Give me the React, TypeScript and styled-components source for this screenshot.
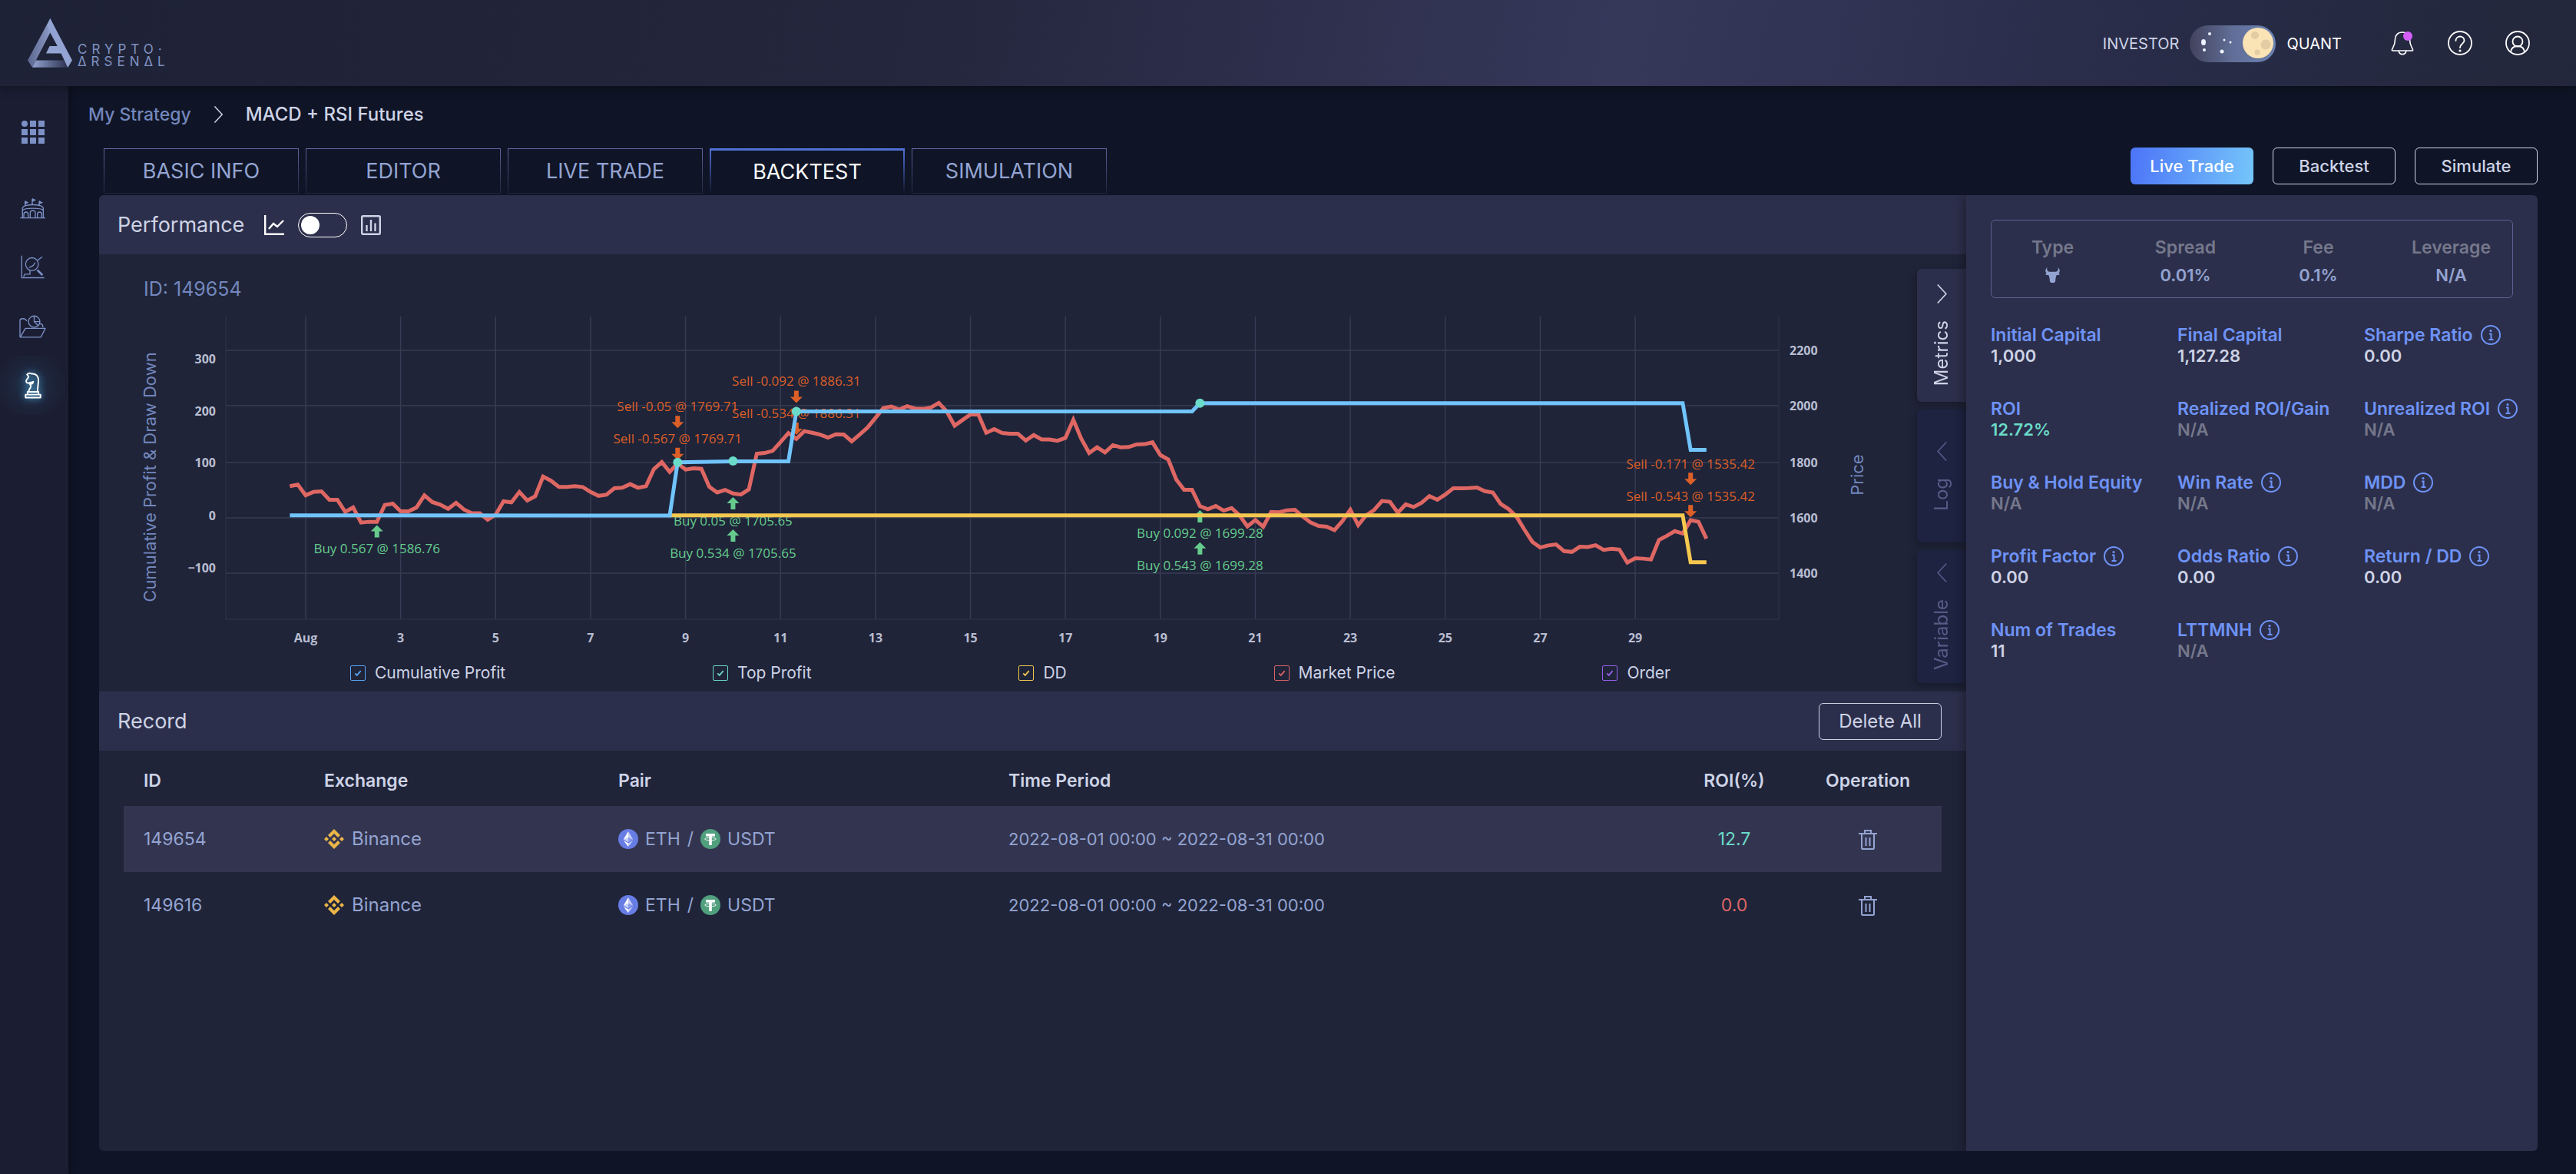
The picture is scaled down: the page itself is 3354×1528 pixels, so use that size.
import React from "react";
import styled, { createGlobalStyle, css } from "styled-components";

const color = {
  page: "#0f1526",
  rail: "#1b1e33",
  panel: "#1f2439",
  bar: "#2c2f4b",
  rowActive: "#333550",
  light: "#ced3e6",
  muted: "#94a4d2",
  dim: "#7387bd",
  blue: "#6e93f7",
  grey: "#75788c",
  green: "#6adbc9",
  red: "#dd6464",
  line: "#5b6192",
};

const GlobalStyle = createGlobalStyle`
  *, *::before, *::after { box-sizing: border-box; }
  body {
    margin: 0;
    background: ${color.page};
    color: ${color.light};
    font-family: Inter, "Liberation Sans", sans-serif;
    font-size: 23px;
    line-height: 28px;
  }
  button { font: inherit; color: inherit; background: none; border: 0; padding: 0; cursor: pointer; }
  a { color: inherit; text-decoration: none; }
  svg { display: block; flex: none; }
`;

/* ---------- page frame ---------- */

const Page = styled.div`
  min-height: 100vh;
  display: flex;
  flex-direction: column;
`;

const TopBar = styled.header`
  position: relative;
  z-index: 2;
  height: 112px;
  padding: 0 60px 0 36px;
  display: flex;
  align-items: center;
  justify-content: space-between;
  background: linear-gradient(100deg, #1e2236 0%, #23263c 35%, #36385a 63%, #282c48 83%, #22273b 100%);
  box-shadow: 0 4px 12px rgba(0, 0, 0, 0.3);
`;

const Brand = styled.a`
  display: flex;
  align-items: flex-end;
  gap: 7px;
`;

const BrandName = styled.span`
  display: flex;
  flex-direction: column;
  color: #7f92c2;
  font-size: 17px;
  line-height: 16px;
  letter-spacing: 6px;
`;

const TopTools = styled.div`
  display: flex;
  align-items: center;
  gap: 43px;
`;

const ModeSwitch = styled.label`
  position: relative;
  display: flex;
  align-items: center;
  gap: 14px;
  margin-right: 20px;
  padding-top: 2px;
  font-size: 20px;
`;

const ModeName = styled.span<{ $on?: boolean }>`
  color: ${(p) => (p.$on ? "#ffffff" : color.light)};
`;

const HiddenInput = styled.input`
  position: absolute;
  opacity: 0;
  inset: 0;
  margin: 0;
`;

const IconButton = styled.button`
  display: grid;
  place-items: center;
  width: 32px;
  height: 36px;
  color: #fff;
`;

const Body = styled.div`
  flex: 1;
  display: flex;
`;

const Rail = styled.nav`
  width: 89px;
  flex: none;
  background: ${color.rail};
  box-shadow: 2px 0 10px rgba(0, 0, 0, 0.35);
  display: flex;
  flex-direction: column;
  padding-top: 21px;
  color: #7c90c6;
`;

const RailLink = styled.a<{ $first?: boolean; $active?: boolean }>`
  display: grid;
  place-items: center;
  height: 77px;
  padding-right: 4px;
  margin-bottom: ${(p) => (p.$first ? 22 : 0)}px;
  ${(p) =>
    p.$active &&
    css`
      color: #fff;
      background: radial-gradient(circle at 45% 50%, #24405c 0%, rgba(31, 48, 72, 0.5) 35%, transparent 75%);
      svg { filter: drop-shadow(0 0 5px #57b4ee); }
    `}
`;

const Main = styled.main`
  flex: 1;
  min-width: 0;
  display: flex;
  flex-direction: column;
  padding: 18px 50px 30px 40px;
`;

const Crumbs = styled.nav`
  display: flex;
  align-items: center;
  gap: 29px;
  height: 38px;
  margin-left: -14px;
  font-weight: 500;
  color: ${color.light};
`;

const CrumbLink = styled.a`
  color: ${color.dim};
`;

const CrumbHere = styled.span`
  font-size: 24px;
`;

const Toolbar = styled.div`
  display: flex;
  justify-content: space-between;
  align-items: flex-start;
  margin-top: 24px;
  height: 62px;
`;

const Tabs = styled.div`
  display: flex;
  gap: 9px;
  padding: 1px 0 0 6px;
`;

const Tab = styled.button<{ $active?: boolean }>`
  width: 254px;
  height: 59px;
  font-size: 27px;
  color: ${(p) => (p.$active ? "#fff" : color.muted)};
  border: 1px solid;
  border-image: linear-gradient(to bottom, #6268a0, #1f2440) 1;
  ${(p) =>
    p.$active &&
    css`
      border-width: 3px 2px 0;
      border-image: linear-gradient(to bottom, #5272dc, #0f1526) 3 2 0;
    `}
`;

const Actions = styled.div`
  display: flex;
  gap: 25px;
`;

const Button = styled.button<{ $primary?: boolean }>`
  width: 160px;
  height: 48px;
  border-radius: 6px;
  border: 1px solid ${color.light};
  font-size: 22px;
  font-weight: 500;
  ${(p) =>
    p.$primary &&
    css`
      border: 0;
      color: #fff;
      background: linear-gradient(100deg, #4c74f8, #75c6fa);
    `}
`;

const DeleteAll = styled(Button)`
  font-size: 24px;
  font-weight: 400;
`;

const Work = styled.div`
  flex: 1;
  display: flex;
  border-radius: 6px;
  overflow: hidden;
`;

const Left = styled.div`
  flex: 1;
  min-width: 0;
  background: ${color.panel};
`;

const Bar = styled.div`
  height: 77px;
  padding: 0 32px 0 24px;
  display: flex;
  align-items: center;
  justify-content: space-between;
  background: ${color.bar};
`;

const BarTitle = styled.h2`
  margin: 0;
  font-size: 27px;
  font-weight: 400;
`;

const ViewSwitch = styled.div`
  display: flex;
  align-items: center;
  gap: 18px;
  flex: 1;
  margin-left: 26px;
`;

const Switch = styled.input`
  appearance: none;
  margin: 0;
  width: 64px;
  height: 32px;
  border: 1px solid #fff;
  border-radius: 16px;
  padding: 3px;
  &::before {
    content: "";
    display: block;
    width: 24px;
    height: 24px;
    border-radius: 50%;
    background: #fff;
  }
`;

/* ---------- chart ---------- */

const ChartSection = styled.section`
  display: flex;
`;

const ChartColumn = styled.div`
  flex: 1;
  min-width: 0;
`;

const RunId = styled.p`
  margin: 27px 0 6px 58px;
  font-size: 25px;
  line-height: 36px;
  color: ${color.dim};
`;

const ChartSvg = styled.svg`
  width: 100%;
  height: auto;
`;

const Legend = styled.div`
  height: 50px;
  padding: 2px 186px 0 192px;
  display: flex;
  justify-content: space-around;
  align-items: center;
`;

const LegendItem = styled.label<{ $color: string }>`
  display: flex;
  align-items: center;
  gap: 12px;
  font-size: 21px;
  position: relative;
  svg {
    position: absolute;
    left: 5px;
    top: 9px;
    color: ${(p) => p.$color};
  }
  input {
    appearance: none;
    margin: 0;
    width: 20px;
    height: 20px;
    border: 1px solid ${(p) => p.$color};
    border-radius: 2px;
  }
`;

const SideTabs = styled.div`
  width: 64px;
  padding-top: 19px;
  display: flex;
  flex-direction: column;
  gap: 10px;
`;

const SideTab = styled.button<{ $active?: boolean }>`
  height: 173px;
  display: flex;
  flex-direction: column;
  align-items: center;
  justify-content: center;
  gap: 22px;
  border-radius: 6px 0 0 6px;
  background: ${(p) => (p.$active ? color.bar : "#1d2340")};
  color: ${(p) => (p.$active ? color.light : "#565b88")};
  box-shadow: -3px 4px 10px rgba(0, 0, 0, 0.25);
  font-size: 24px;
`;

const Upright = styled.span`
  writing-mode: vertical-rl;
  rotate: 180deg;
`;

/* ---------- record table ---------- */

const TableWrap = styled.div`
  padding: 6px 32px 0;
`;

const Table = styled.table`
  width: 100%;
  border-collapse: collapse;
  table-layout: fixed;
  color: ${color.muted};
`;

const Head = styled.th<{ $w?: number; $center?: boolean }>`
  width: ${(p) => (p.$w ? p.$w + "px" : "auto")};
  height: 66px;
  padding: 0 0 0 ${(p) => (p.$center ? 0 : 26)}px;
  text-align: ${(p) => (p.$center ? "center" : "left")};
  font-weight: 600;
  color: ${color.light};
`;

const Row = styled.tr<{ $active?: boolean }>`
  height: 86px;
  background: ${(p) => (p.$active ? color.rowActive : "transparent")};
`;

const Cell = styled.td<{ $center?: boolean; $tone?: string }>`
  padding: 0 0 0 ${(p) => (p.$center ? 0 : 26)}px;
  text-align: ${(p) => (p.$center ? "center" : "left")};
  color: ${(p) => p.$tone || "inherit"};
`;

const PeriodCell = styled(Cell)`
  font-size: 22px;
`;

const Inline = styled.div<{ $large?: boolean }>`
  display: flex;
  align-items: center;
  gap: ${(p) => (p.$large ? 10 : 9)}px;
  font-size: ${(p) => (p.$large ? 24 : 23)}px;
`;

const TrashButton = styled.button`
  display: inline-block;
  vertical-align: middle;
`;

/* ---------- metrics ---------- */

const Aside = styled.aside`
  width: 744px;
  flex: none;
  padding: 32px;
  background: ${color.bar};
  box-shadow: -4px 0 12px rgba(0, 0, 0, 0.3);
  z-index: 1;
  font-size: 23px;
  font-weight: 600;
`;

const Terms = styled.dl`
  margin: 0;
  height: 102px;
  padding-top: 6px;
  border: 1px solid ${color.line};
  border-radius: 6px;
  display: grid;
  grid-template-columns: repeat(4, 173px);
  justify-content: center;
  align-items: center;
  text-align: center;
`;

const Term = styled.div`
  display: flex;
  flex-direction: column;
  align-items: center;
  gap: 8px;
  dt { color: ${color.grey}; }
  dd { margin: 0; height: 28px; display: flex; align-items: center; color: ${color.muted}; font-size: 22px; }
`;

const Metrics = styled.dl`
  margin: 34px 0 0;
  display: grid;
  grid-template-columns: repeat(3, 243px);
  row-gap: 40px;
`;

const Metric = styled.div<{ $tone: string }>`
  height: 56px;
  dt {
    display: flex;
    align-items: center;
    gap: 10px;
    height: 28px;
    white-space: nowrap;
    color: ${color.blue};
  }
  dd { margin: 0; font-size: 22px; line-height: 26px; color: ${(p) => p.$tone}; }
`;

/* ---------- icons ---------- */

const Logo = () => (
  <svg width="58" height="64" viewBox="50 45 172 190" fill="none">
    <defs>
      <linearGradient id="lgLeft" x1="0" y1="0" x2="1" y2="0">
        <stop offset="0" stopColor="#5a678f" />
        <stop offset="0.6" stopColor="#7c89b3" />
        <stop offset="1" stopColor="#93a4d2" />
      </linearGradient>
      <linearGradient id="lgBase" x1="0" y1="0" x2="1" y2="0">
        <stop offset="0" stopColor="#93a4d2" />
        <stop offset="1" stopColor="#2b3050" />
      </linearGradient>
    </defs>
    <path d="M137 45 50 207l18 27 69-134 14-26z" fill="url(#lgLeft)" />
    <path d="M82 207h108l15 27H68z" fill="url(#lgBase)" />
    <path d="M137 45 222 207l-17 28-26-55h-58l14-28h30l-28-52-12-28z" fill="#93a4d2" />
  </svg>
);

const MoonSwitchArt = () => (
  <svg width="112" height="48" viewBox="0 0 112 48">
    <defs>
      <linearGradient id="night" x1="0" y1="0" x2="1" y2="0">
        <stop offset="0" stopColor="#42435d" />
        <stop offset="0.5" stopColor="#616e97" />
        <stop offset="1" stopColor="#6b83b5" />
      </linearGradient>
    </defs>
    <rect width="112" height="48" rx="24" fill="url(#night)" />
    <g fill="#eef3ff">
      <ellipse cx="18" cy="22" rx="3" ry="4" />
      <circle cx="26" cy="11" r="2" />
      <circle cx="19" cy="32" r="2" />
      <circle cx="45" cy="19" r="1.5" />
      <circle cx="53" cy="22" r="1.5" />
      <circle cx="42" cy="34" r="2.5" />
    </g>
    <circle cx="89" cy="24" r="20" fill="#3b4670" opacity="0.4" />
    <circle cx="89" cy="23" r="20" fill="#fae3b5" />
    <g fill="#e3cba4">
      <circle cx="85" cy="13" r="5" />
      <circle cx="99" cy="25" r="6.5" />
      <circle cx="88" cy="35" r="3.5" />
    </g>
  </svg>
);

const Bell = () => (
  <svg width="30" height="32" viewBox="0 0 30 32" fill="none" stroke="currentColor" strokeWidth="1.6">
    <path d="M15 2C9 2 5.500 6 5.500 11c0 7-2 9.500-4 13.500-.4.900 0 1.500.8 1.500h25.400c.8 0 1.200-.6.800-1.500-2-4-4-6.500-4-13.500C24.500 6 21 2 15 2z" />
    <path d="M10 26c.6 3 2.500 4.600 5 4.600s4.400-1.600 5-4.600" />
    <circle cx="22" cy="7" r="6" fill="#d45df8" stroke="none" />
  </svg>
);

const Help = () => (
  <svg width="32" height="32" viewBox="0 0 32 32" fill="none" stroke="currentColor" strokeWidth="1.800" strokeLinecap="round">
    <circle cx="16" cy="16" r="15" />
    <path d="M10.500 13c0-3.200 2.400-5.500 5.500-5.500s5.500 2.200 5.500 5.200c0 4.300-5.500 4.300-5.500 9.300" />
    <circle cx="16" cy="26" r="0.700" fill="currentColor" />
  </svg>
);

const User = () => (
  <svg width="32" height="32" viewBox="0 0 32 32" fill="none" stroke="currentColor" strokeWidth="1.800">
    <circle cx="16" cy="16" r="15" />
    <circle cx="16" cy="14" r="6.500" />
    <path d="M7 28c.5-5 4-8 9-8s8.500 3 9 8" />
  </svg>
);

const GridIcon = () => (
  <svg width="30" height="30" viewBox="0 0 30 30" fill="currentColor">
    {[0, 1, 2].flatMap((r) =>
      [0, 1, 2].map((c) =>
        r + c === 0 ? (
          <circle key="dot" cx="4" cy="4" r="4" />
        ) : (
          <rect key={`${r}${c}`} x={c * 11} y={r * 11} width="8" height="8" />
        )
      )
    )}
  </svg>
);

const Arena = () => (
  <svg width="34" height="28" viewBox="47 352 102 84" fill="none" stroke="currentColor" strokeWidth="4">
    <path d="M48 432h98M57 430v-36c0-18 81-18 81 0v36M57 402c10-10 71-10 81 0M62 430v-12c0-12 17-12 17 0v12M87 430v-18c0-12 20-12 20 0v18M115 430v-12c0-12 17-12 17 0v12M67 386v-20M95 380v-22M122 386v-20" />
    <path d="M67 364l14 8-14 7zM95 355l15 7-15 8zM122 364l15 8-15 7z" fill="currentColor" stroke="none" />
  </svg>
);

const Research = () => (
  <svg width="31" height="31" viewBox="50 574 93 92" fill="none" stroke="currentColor" strokeWidth="4">
    <path d="M54 576v86h88M61 657l5-9h20v-15" />
    <circle cx="94" cy="609" r="25" />
    <path d="M82 622c10-2 20-8 24-19M116 594l18-14" />
    <path d="M115 632l20 20" strokeWidth="8" />
  </svg>
);

const Folder = () => (
  <svg width="35" height="30" viewBox="44 808 104 88" fill="none" stroke="currentColor" strokeWidth="4" strokeLinejoin="round">
    <path d="M47 892v-64c0-8 20-8 22-3l4 6M48 893h80l17-34H68z" />
    <circle cx="102" cy="833" r="22" />
    <path d="M102 811v22h22M102 833l16 16M124 842c8-2 12 4 12 14" />
  </svg>
);

const Knight = () => (
  <svg width="22" height="35" viewBox="61 1029 68 107" fill="none" stroke="currentColor" strokeWidth="6" strokeLinejoin="round">
    <path d="M65 1132v-12h60v12zM73 1118v-9h44v9M78 1106c0-8 8-12 8-20l-3-8c8 0 12-4 13-10-6 4-14 2-18 6l-8-2c-5-5-2-12 4-17l3-8-6-8c5-5 13-6 18-3 24-2 30 18 27 36l-3 34" />
  </svg>
);

const Chevron = ({ left, w = 12, h = 24 }: { left?: boolean; w?: number; h?: number }) => (
  <svg width={w} height={h} viewBox="0 0 12 24" fill="none" stroke="currentColor" strokeWidth="1.600">
    <path d={left ? "M11.500 0.500.8 12l10.700 11.500" : "M.5.500 11.200 12 .5 23.500"} />
  </svg>
);

const LineChartIcon = () => (
  <svg width="26" height="26" viewBox="0 0 26 26" fill="none" stroke="#fff" strokeWidth="2.400">
    <path d="M1.200 0v24.800H26M6 18l6-7 5 4 8-8" />
  </svg>
);

const BarChartIcon = () => (
  <svg width="26" height="26" viewBox="0 0 26 26" fill="none" stroke={color.light} strokeWidth="2.400">
    <rect x="1.200" y="1.200" width="23.600" height="23.600" rx="1.500" />
    <path d="M7.500 21v-8M13 21V6M18.500 21V10.500" />
  </svg>
);

const InfoIcon = () => (
  <svg width="26" height="26" viewBox="0 0 26 26" fill="none" stroke="currentColor" strokeWidth="2">
    <circle cx="13" cy="13" r="12" />
    <path d="M11 11.500h2.500V19M10.500 19h6" />
    <circle cx="13" cy="7.500" r="1" fill="currentColor" stroke="none" />
    <circle cx="13" cy="7.500" r="0.600" />
  </svg>
);

const Bull = () => (
  <svg width="19" height="20" viewBox="0 0 19 20" fill="currentColor">
    <path d="M2.500 0C0 2-.5 5.500 1.500 7.500L0 9.500l4.500.8L5.500 14l.5 4.500L7.500 20h4l1.500-1.500.5-4.500 1-3.700 4.500-.8-1.500-2C19.500 5.500 19 2 16.500 0c1 3-.2 5.500-3.500 5.800H6C2.700 5.500 1.500 3 2.500 0z" />
  </svg>
);

const Binance = () => (
  <svg width="26" height="26" viewBox="0 0 26 26" fill="#ebb547">
    <path d="M13 0l8 8-3 3-5-5-5 5-3-3zM13 26l8-8-3-3-5 5-5-5-3 3zM13 10l3 3-3 3-3-3zM3 10l3 3-3 3-3-3zM23 10l3 3-3 3-3-3z" />
  </svg>
);

const Eth = () => (
  <svg width="26" height="26" viewBox="0 0 26 26">
    <circle cx="13" cy="13" r="13" fill="#687de3" />
    <path d="M13 3v10.500L6.800 13.500z" fill="#fff" />
    <path d="M13 3v10.500h6.200z" fill="#c6cff7" />
    <path d="M6.800 13.500 13 10.800v6.400z" fill="#c6cff7" />
    <path d="M19.200 13.500 13 10.800v6.400z" fill="#8c9cec" />
    <path d="M6.800 15l6.200 3.500V23z" fill="#fff" />
    <path d="M19.200 15 13 18.500V23z" fill="#c6cff7" />
  </svg>
);

const Tether = () => (
  <svg width="26" height="26" viewBox="0 0 26 26">
    <circle cx="13" cy="13" r="13" fill="#509f7d" />
    <path d="M7 6h12v3.500h-4.200V21h-3.600V9.500H7z" fill="#fff" />
    <ellipse cx="13" cy="13" rx="7.500" ry="1.700" fill="none" stroke="#fff" strokeWidth="0.900" />
  </svg>
);

const Trash = () => (
  <svg width="24" height="26" viewBox="0 0 24 26" fill="none" stroke={color.muted} strokeWidth="2">
    <path d="M0 5h24M8 4V1h8v3M4 6v17.500c0 .9.600 1.500 1.500 1.500h13c.9 0 1.500-.6 1.500-1.500V6M9.500 10v11M14.500 10v11" />
  </svg>
);

/* ---------- chart data ---------- */

// Four-hour samples; twelve of them span one two-day grid column.
const FIRST_SAMPLE = -2;
const sampleX = (i: number) => 398 + i * 10.304;
const levelY = (v: number) => 380 + v * 0.338;

const marketPrice = [
  748, 742, 783, 770, 768, 800, 800, 847, 830, 888, 885, 885, 820, 815, 845, 845, 830, 783, 809, 819, 835, 812, 838,
  852, 852, 877, 858, 806, 810, 770, 803, 787, 711, 727, 751, 751, 748, 751, 770, 785, 781, 756, 754, 740, 754, 748,
  682, 655, 693, 660, 684, 679, 681, 750, 772, 762, 776, 780, 760, 623, 620, 612, 578, 543, 566, 536, 542, 549, 561,
  548, 549, 575, 549, 522, 485, 447, 441, 453, 440, 449, 450, 445, 427, 460, 515, 493, 472, 472, 542, 528, 543, 546,
  546, 572, 551, 568, 568, 573, 562, 492, 565, 620, 598, 618, 590, 598, 597, 587, 586, 579, 628, 645, 722, 762, 762,
  825, 837, 824, 842, 832, 860, 903, 878, 904, 847, 848, 841, 839, 865, 888, 901, 904, 917, 882, 838, 898, 860, 840,
  805, 808, 850, 818, 828, 812, 786, 800, 780, 756, 756, 755, 753, 767, 772, 816, 836, 865, 915, 962, 984, 976, 972,
  998, 1001, 981, 982, 975, 993, 989, 992, 1042, 1025, 1027, 1030, 955, 939, 921, 930, 879, 885, 950,
];

type Knot = [number, number];
const profit: Knot[] = [
  [-2, 860], [46, 861], [47, 656], [54, 652], [61, 652], [62, 460], [112, 460], [113, 428], [174, 428], [175, 608], [177, 608],
];
const drawDown: Knot[] = [[46, 860], [174, 860], [175, 1041], [177, 1041]];
const topProfit: Knot[] = [[47, 656], [54, 651], [62, 460], [113, 428]];

const toPoints = (knots: Knot[]) => knots.map(([i, v]) => `${sampleX(i)},${levelY(v)}`).join(" ");

const sells = [
  { i: 47, text: "Sell -0.05 @ 1769.71", base: 460, arrow: 477 },
  { i: 47, text: "Sell -0.567 @ 1769.71", base: 584, arrow: 600 },
  { i: 62, text: "Sell -0.092 @ 1886.31", base: 361, arrow: 380 },
  { i: 62, text: "Sell -0.534 @ 1886.31", base: 486, arrow: 503 },
  { i: 175, text: "Sell -0.171 @ 1535.42", base: 680, arrow: 696 },
  { i: 175, text: "Sell -0.543 @ 1535.42", base: 804, arrow: 820 },
];
const buys = [
  { i: 9, text: "Buy 0.567 @ 1586.76", base: 1005, arrow: 898 },
  { i: 54, text: "Buy 0.05 @ 1705.65", base: 899, arrow: 790 },
  { i: 54, text: "Buy 0.534 @ 1705.65", base: 1024, arrow: 914 },
  { i: 113, text: "Buy 0.092 @ 1699.28", base: 946, arrow: 840 },
  { i: 113, text: "Buy 0.543 @ 1699.28", base: 1070, arrow: 964 },
];

const days = ["Aug", "3", "5", "7", "9", "11", "13", "15", "17", "19", "21", "23", "25", "27", "29"];
const prices: [string, number][] = [["2200", 456], ["2000", 528], ["1800", 602], ["1600", 674], ["1400", 746]];
const profits: [string, number][] = [["300", 467], ["200", 535], ["100", 602], ["0", 671], ["−100", 739]];

const AxisText = styled.text`
  font: 700 16px "Open Sans", sans-serif;
  fill: #b9bdd0;
`;

const OrderText = styled.text`
  font: 400 17px "Open Sans", sans-serif;
  text-anchor: middle;
`;

const AxisTitle = styled.text`
  font-size: 22px;
  fill: #7387bd;
  text-anchor: middle;
`;

const Chart = () => (
  <ChartSvg viewBox="129 400 2367 450" role="img" aria-label="Performance chart">
    <g stroke="#373b53" strokeWidth="1.500">
      {prices.map(([t, y]) => (
        <path key={t} d={`M294 ${y}H2316`} />
      ))}
      {days.map((d, n) => (
        <path key={d} d={`M${sampleX(n * 12)} 412V806`} />
      ))}
      <path d="M294 412V806H2316V412" fill="none" stroke="#2b2f46" />
    </g>
    {days.map((d, n) => (
      <AxisText key={d} x={sampleX(n * 12)} y="836" textAnchor="middle">{d}</AxisText>
    ))}
    {prices.map(([t, y]) => (
      <AxisText key={t} x="2330" y={y + 6}>{t}</AxisText>
    ))}
    {profits.map(([t, y]) => (
      <AxisText key={t} x="281" y={y + 6} textAnchor="end">{t}</AxisText>
    ))}
    <AxisTitle transform="translate(203 621) rotate(-90)">Cumulative Profit &amp; Draw Down</AxisTitle>
    <AxisTitle transform="translate(2426 618) rotate(-90)">Price</AxisTitle>
    <g fill="#dc5f27">
      {sells.map((s) => (
        <g key={s.text}>
          <OrderText x={sampleX(s.i)} y={levelY(s.base)}>{s.text}</OrderText>
          <path d={`M${sampleX(s.i) - 3} ${levelY(s.arrow)}h6v8h5l-8 8-8-8h5z`} />
        </g>
      ))}
    </g>
    <g fill="#66cc8d">
      {buys.map((b) => (
        <g key={b.text}>
          <OrderText x={sampleX(b.i)} y={levelY(b.base)}>{b.text}</OrderText>
          <path d={`M${sampleX(b.i)} ${levelY(b.arrow)}l8 8h-5v8h-6v-8h-5z`} />
        </g>
      ))}
    </g>
    <g fill="none" strokeWidth="5">
      <polyline
        stroke="#de6763"
        points={marketPrice.map((v, n) => `${sampleX(n + FIRST_SAMPLE)},${levelY(v)}`).join(" ")}
      />
      <polyline stroke="#f5c84f" points={toPoints(drawDown)} />
      <polyline stroke="#70c4fb" points={toPoints(profit)} />
    </g>
    <g fill={color.green}>
      {topProfit.map(([i, v]) => (
        <circle key={i} cx={sampleX(i)} cy={levelY(v)} r="6" />
      ))}
    </g>
  </ChartSvg>
);

/* ---------- content ---------- */

const legend: [string, string][] = [
  ["Cumulative Profit", "#5ba6f5"],
  ["Top Profit", "#6adbc9"],
  ["DD", "#f5c84f"],
  ["Market Price", "#dd6464"],
  ["Order", "#9a5ff0"],
];

const metrics: { name: string; value: string; info?: boolean; tone?: string }[] = [
  { name: "Initial Capital", value: "1,000" },
  { name: "Final Capital", value: "1,127.28" },
  { name: "Sharpe Ratio", value: "0.00", info: true },
  { name: "ROI", value: "12.72%", tone: color.green },
  { name: "Realized ROI/Gain", value: "N/A" },
  { name: "Unrealized ROI", value: "N/A", info: true },
  { name: "Buy & Hold Equity", value: "N/A" },
  { name: "Win Rate", value: "N/A", info: true },
  { name: "MDD", value: "N/A", info: true },
  { name: "Profit Factor", value: "0.00", info: true },
  { name: "Odds Ratio", value: "0.00", info: true },
  { name: "Return / DD", value: "0.00", info: true },
  { name: "Num of Trades", value: "11" },
  { name: "LTTMNH", value: "N/A", info: true },
];

const records = [
  { id: "149654", roi: "12.7", tone: color.green },
  { id: "149616", roi: "0.0", tone: color.red },
];

const railItems = [
  { label: "Dashboard", icon: <GridIcon /> },
  { label: "Arena", icon: <Arena /> },
  { label: "Research", icon: <Research /> },
  { label: "Portfolio", icon: <Folder /> },
  { label: "Strategy", icon: <Knight /> },
];

export default function App() {
  return (
    <Page>
      <GlobalStyle />
      <TopBar>
        <Brand href="#" aria-label="Crypto Arsenal">
          <Logo />
          <BrandName>
            <span>CRYPTO·</span>
            <span>ΔRSENΔL</span>
          </BrandName>
        </Brand>
        <TopTools>
          <ModeSwitch>
            <HiddenInput type="checkbox" role="switch" defaultChecked />
            <ModeName>INVESTOR</ModeName>
            <MoonSwitchArt />
            <ModeName $on>QUANT</ModeName>
          </ModeSwitch>
          <IconButton aria-label="Notifications"><Bell /></IconButton>
          <IconButton aria-label="Help"><Help /></IconButton>
          <IconButton aria-label="Account"><User /></IconButton>
        </TopTools>
      </TopBar>
      <Body>
        <Rail>
          {railItems.map((item, n) => (
            <RailLink key={item.label} href="#" aria-label={item.label} $first={n === 0} $active={n === 4}>
              {item.icon}
            </RailLink>
          ))}
        </Rail>
        <Main>
          <Crumbs>
            <CrumbLink href="#">My Strategy</CrumbLink>
            <Chevron w={13} h={22} />
            <CrumbHere>MACD + RSI Futures</CrumbHere>
          </Crumbs>
          <Toolbar>
            <Tabs>
              {["BASIC INFO", "EDITOR", "LIVE TRADE", "BACKTEST", "SIMULATION"].map((t) => (
                <Tab key={t} $active={t === "BACKTEST"}>{t}</Tab>
              ))}
            </Tabs>
            <Actions>
              <Button $primary>Live Trade</Button>
              <Button>Backtest</Button>
              <Button>Simulate</Button>
            </Actions>
          </Toolbar>
          <Work>
            <Left>
              <Bar>
                <BarTitle>Performance</BarTitle>
                <ViewSwitch>
                  <LineChartIcon />
                  <Switch type="checkbox" role="switch" aria-label="Show bar chart" />
                  <BarChartIcon />
                </ViewSwitch>
              </Bar>
              <ChartSection>
                <ChartColumn>
                  <RunId>ID: 149654</RunId>
                  <Chart />
                  <Legend>
                    {legend.map(([name, tint]) => (
                      <LegendItem key={name} $color={tint}>
                        <input type="checkbox" defaultChecked />
                        <svg width="10" height="10" viewBox="0 0 12 12" fill="none" stroke="currentColor" strokeWidth="2">
                          <path d="M1.500 6.500l3 3 6-7" />
                        </svg>
                        {name}
                      </LegendItem>
                    ))}
                  </Legend>
                </ChartColumn>
                <SideTabs>
                  {["Metrics", "Log", "Variable"].map((t, n) => (
                    <SideTab key={t} $active={n === 0}>
                      <Chevron left={n > 0} w={13} h={25} />
                      <Upright>{t}</Upright>
                    </SideTab>
                  ))}
                </SideTabs>
              </ChartSection>
              <Bar>
                <BarTitle>Record</BarTitle>
                <DeleteAll>Delete All</DeleteAll>
              </Bar>
              <TableWrap>
                <Table>
                  <thead>
                    <tr>
                      <Head $w={235}>ID</Head>
                      <Head $w={383}>Exchange</Head>
                      <Head $w={508}>Pair</Head>
                      <Head>Time Period</Head>
                      <Head $w={156} $center>ROI(%)</Head>
                      <Head $w={192} $center>Operation</Head>
                    </tr>
                  </thead>
                  <tbody>
                    {records.map((r, n) => (
                      <Row key={r.id} $active={n === 0}>
                        <Cell>{r.id}</Cell>
                        <Cell>
                          <Inline $large><Binance />Binance</Inline>
                        </Cell>
                        <Cell>
                          <Inline>
                            <Eth />ETH <span>/</span> <Tether />USDT
                          </Inline>
                        </Cell>
                        <PeriodCell>2022-08-01 00:00 ~ 2022-08-31 00:00</PeriodCell>
                        <Cell $center $tone={r.tone}>{r.roi}</Cell>
                        <Cell $center>
                          <TrashButton aria-label={`Delete ${r.id}`}><Trash /></TrashButton>
                        </Cell>
                      </Row>
                    ))}
                  </tbody>
                </Table>
              </TableWrap>
            </Left>
            <Aside>
              <Terms>
                <Term><dt>Type</dt><dd><Bull /></dd></Term>
                <Term><dt>Spread</dt><dd>0.01%</dd></Term>
                <Term><dt>Fee</dt><dd>0.1%</dd></Term>
                <Term><dt>Leverage</dt><dd>N/A</dd></Term>
              </Terms>
              <Metrics>
                {metrics.map((m) => (
                  <Metric key={m.name} $tone={m.tone || (m.value === "N/A" ? color.grey : color.light)}>
                    <dt>{m.name}{m.info && <InfoIcon />}</dt>
                    <dd>{m.value}</dd>
                  </Metric>
                ))}
              </Metrics>
            </Aside>
          </Work>
        </Main>
      </Body>
    </Page>
  );
}
